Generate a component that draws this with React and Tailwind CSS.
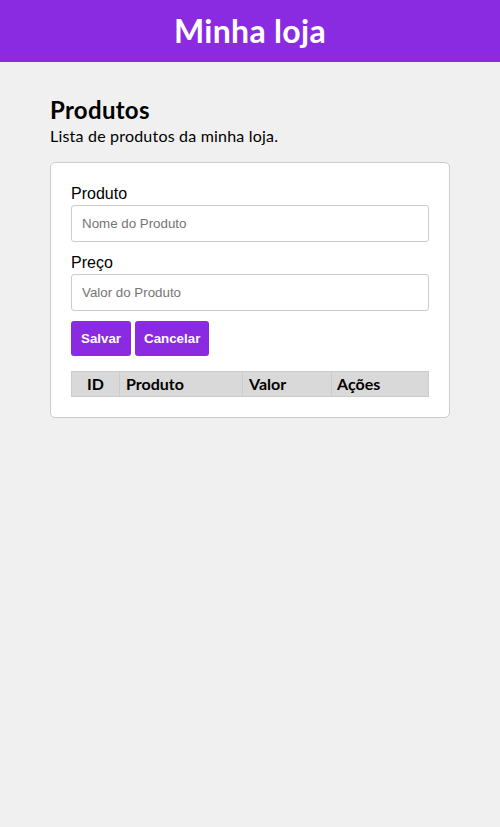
export default function App() {
  const nunito = { fontFamily: 'Lato, "Open Sans", sans-serif' };
  return (
    <div className="min-h-[827px] bg-[#eff0ef]" style={nunito}>
      <header className="h-[62px] bg-[#8a2be2] flex items-center justify-center">
        <h1 className="text-[32px] font-bold text-white leading-none tracking-[0.3px]">Minha loja</h1>
      </header>
      <main className="px-[50px] pt-[33px]">
        <h2 className="text-[24px] font-bold text-black leading-[30px] tracking-[0.3px]">Produtos</h2>
        <p className="text-[16px] text-black leading-[20px] mt-[1px] tracking-[0.2px]">Lista de produtos da minha loja.</p>
        <div className="mt-[16px] w-[400px] bg-white border border-[#cccccc] rounded-[5px] px-[20px] pt-[20px] pb-[20px]">
          <div style={{ fontFamily: '"Liberation Sans", Arial, sans-serif' }}>
            <label className="block text-[16px] text-black leading-[22px]">Produto</label>
            <input
              className="block w-[358px] h-[37px] border border-[#cccccc] rounded-[3px] px-[10px] text-[13.333px] placeholder:text-[#757575] outline-none"
              placeholder="Nome do Produto"
            />
            <label className="block mt-[10px] text-[16px] text-black leading-[22px]">Preço</label>
            <input
              className="block w-[358px] h-[37px] border border-[#cccccc] rounded-[3px] px-[10px] text-[13.333px] placeholder:text-[#757575] outline-none"
              placeholder="Valor do Produto"
            />
            <div className="mt-[10px] flex gap-[4px]">
              <button className="h-[35px] px-[10px] bg-[#8a2be2] text-white text-[13.333px] font-bold rounded-[3px]">Salvar</button>
              <button className="h-[35px] px-[9px] bg-[#8a2be2] text-white text-[13.333px] font-bold rounded-[3px]">Cancelar</button>
            </div>
          </div>
          <table className="mt-[15px] w-[358px] border-collapse" style={nunito}>
            <thead>
              <tr className="bg-[#d9d9d9] text-[16px] font-bold text-black h-[25px]">
                <th className="border border-[#cccccc] w-[48px] text-center font-bold leading-[20px] p-0">ID</th>
                <th className="border border-[#cccccc] w-[123px] text-left pl-[6px] font-bold leading-[20px] py-0">Produto</th>
                <th className="border border-[#cccccc] w-[89px] text-left pl-[6px] font-bold leading-[20px] py-0">Valor</th>
                <th className="border border-[#cccccc] text-left pl-[5px] font-bold leading-[20px] py-0">Ações</th>
              </tr>
            </thead>
          </table>
        </div>
      </main>
    </div>
  );
}
